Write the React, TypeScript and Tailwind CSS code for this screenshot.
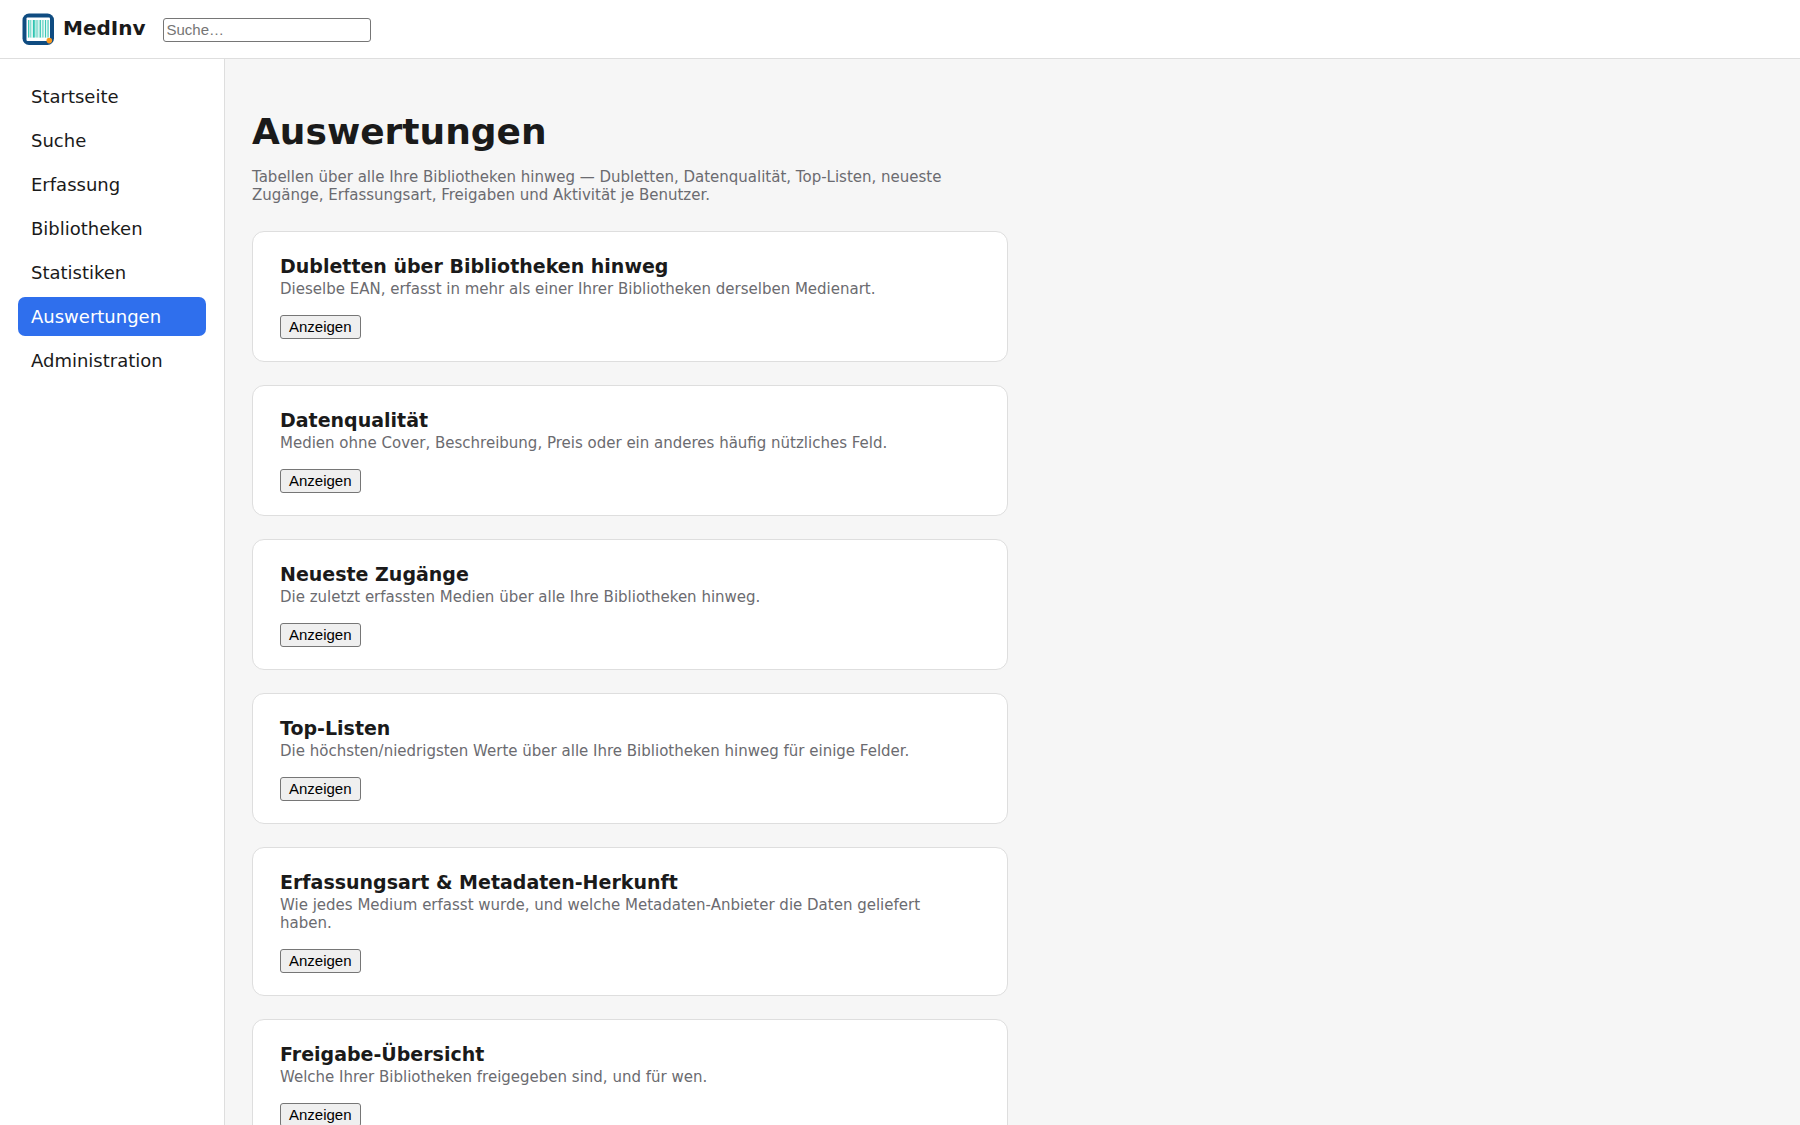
const navItems = [
  "Startseite",
  "Suche",
  "Erfassung",
  "Bibliotheken",
  "Statistiken",
  "Auswertungen",
  "Administration",
];

const reports = [
  {
    title: "Dubletten über Bibliotheken hinweg",
    text: "Dieselbe EAN, erfasst in mehr als einer Ihrer Bibliotheken derselben Medienart.",
  },
  {
    title: "Datenqualität",
    text: "Medien ohne Cover, Beschreibung, Preis oder ein anderes häufig nützliches Feld.",
  },
  {
    title: "Neueste Zugänge",
    text: "Die zuletzt erfassten Medien über alle Ihre Bibliotheken hinweg.",
  },
  {
    title: "Top-Listen",
    text: "Die höchsten/niedrigsten Werte über alle Ihre Bibliotheken hinweg für einige Felder.",
  },
  {
    title: "Erfassungsart & Metadaten-Herkunft",
    text: "Wie jedes Medium erfasst wurde, und welche Metadaten-Anbieter die Daten geliefert haben.",
  },
  {
    title: "Freigabe-Übersicht",
    text: "Welche Ihrer Bibliotheken freigegeben sind, und für wen.",
  },
];

function Logo() {
  return (
    <svg viewBox="0 0 32 32" className="size-8" aria-hidden="true">
      <rect x="0.5" y="0.5" width="31.5" height="31.5" rx="6.5" fill="#0f4c81" />
      <rect x="4.5" y="4.5" width="23.5" height="23.5" rx="1" fill="#fff" />
      <rect x="6" y="7" width="20.5" height="17.5" fill="#b4e9e1" />
      <g fill="#2fc4b2">
        <rect x="6" y="7" width="0.9" height="17.5" />
        <rect x="11" y="7" width="1.7" height="17.5" />
        <rect x="17.6" y="7" width="1.2" height="17.5" />
        <rect x="23" y="7" width="0.9" height="17.5" />
        <rect x="25.6" y="7" width="0.9" height="17.5" />
      </g>
      <g fill="#6fd6c9">
        <rect x="8.4" y="7" width="0.8" height="17.5" />
        <rect x="14.6" y="7" width="0.8" height="17.5" />
        <rect x="20.4" y="7" width="0.8" height="17.5" />
      </g>
      <g fill="#fff">
        <rect x="9.6" y="7" width="0.9" height="17.5" />
        <rect x="16.6" y="7" width="0.7" height="17.5" />
        <rect x="19.3" y="7" width="0.7" height="17.5" />
        <rect x="22" y="7" width="0.7" height="17.5" />
        <rect x="24.4" y="7" width="0.8" height="17.5" />
      </g>
      <circle cx="27.3" cy="27.6" r="2.8" fill="#f8961e" />
    </svg>
  );
}

function ReportCard({ title, text }: { title: string; text: string }) {
  return (
    <section className="rounded-xl border border-[#dedede] bg-white py-[22px] pr-10 pl-[27px]">
      <h2 className="text-[19px] leading-6 font-bold">{title}</h2>
      <p className="mt-[2px] text-[15px] leading-[18px] text-[#6b6b70]">{text}</p>
      <button
        type="button"
        className="mt-[17px] block h-6 rounded-[3px] border border-[#767676] bg-[#efefef] px-2 font-['Liberation_Sans',sans-serif] text-[15px] leading-[22px] text-black"
      >
        Anzeigen
      </button>
    </section>
  );
}

export default function App() {
  return (
    <div className="flex h-screen flex-col overflow-hidden bg-[#f6f6f6] font-['DejaVu_Sans',sans-serif] text-[#1a1a1a]">
      <header className="flex shrink-0 items-center border-b border-[#dedede] bg-white px-[22px] py-[13px]">
        <a href="#startseite" className="flex items-center gap-[9px] text-[20px] font-bold">
          <Logo />
          <span className="pb-[2px] leading-7">MedInv</span>
        </a>
        <input
          type="search"
          aria-label="Suche"
          placeholder="Suche…"
          className="mt-[2px] ml-[17px] h-6 w-52 rounded-[3px] border border-[#767676] bg-white px-[3px] pb-[2px] font-['Liberation_Sans',sans-serif] text-[15px] placeholder:text-[#757575]"
        />
      </header>
      <div className="flex min-h-0 flex-1">
        <nav className="flex w-[225px] shrink-0 flex-col gap-[5px] border-r border-[#dedede] bg-white p-[18px]">
          {navItems.map((item) => (
            <a
              key={item}
              href={"#" + item.toLowerCase()}
              aria-current={item === "Auswertungen" ? "page" : undefined}
              className="rounded-[7px] px-[13px] py-[9px] text-[18px] leading-[21px] aria-[current=page]:bg-[#2f6fed] aria-[current=page]:text-white"
            >
              {item}
            </a>
          ))}
        </nav>
        <main className="min-w-0 flex-1 overflow-hidden px-[27px] pt-[52px]">
          <div className="max-w-[756px]">
            <h1 className="text-[36px] leading-[42px] font-bold">Auswertungen</h1>
            <p className="mt-[15px] text-[15px] leading-[18px] text-[#6b6b70]">
              Tabellen über alle Ihre Bibliotheken hinweg — Dubletten, Datenqualität, Top-Listen, neueste
              Zugänge, Erfassungsart, Freigaben und Aktivität je Benutzer.
            </p>
            <div className="mt-[27px] flex flex-col gap-[23px]">
              {reports.map((report) => (
                <ReportCard key={report.title} title={report.title} text={report.text} />
              ))}
            </div>
          </div>
        </main>
      </div>
    </div>
  );
}
